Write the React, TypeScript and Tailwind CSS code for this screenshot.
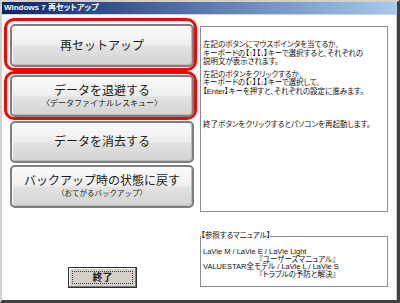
const bigBtn =
  "flex flex-col items-center justify-center rounded-[5px] border-2 border-[#7f7f7f] bg-[linear-gradient(to_bottom,#fbfbfb,#efefef_48%,#e3e3e3_52%,#d3d3d3)] shadow-[inset_1px_1px_0_#ffffff,inset_-1px_-1px_0_#bcbcbc] text-[#1c1c1c]";

export default function App() {
  return (
    <div className="w-[400px] h-[303px] flex flex-col border-l-2 border-t-2 border-[#d4d0c8] border-r-[3px] border-b-[3px] border-r-[#404040] border-b-[#404040] bg-white font-['Liberation_Sans','Noto_Sans_CJK_JP',sans-serif]">
      {/* Title bar */}
      <div className="h-[12px] flex items-center pl-[2px] bg-[linear-gradient(to_right,#0a246a,#a6caf0)] text-white text-[8px] font-bold leading-none [font-feature-settings:'palt']">
        Windows 7 再セットアップ
      </div>
      <div className="h-px bg-[#d4d0c8]" />

      {/* Content */}
      <div className="flex-1 flex border-r border-[#d4d0c8]">
        {/* Left column */}
        <div className="w-[196px] flex flex-col">
          <div className="mt-[3px] ml-[2px] w-[193px] border-[3px] border-[#ff0000] rounded-[10px] pl-[3px] pt-[3px] pb-[1px]">
            <div className={`${bigBtn} h-[43px]`}>
              <span className="text-[12px] leading-none">再セットアップ</span>
            </div>
          </div>
          <div className="ml-[2px] w-[193px] border-[3px] border-[#ff0000] rounded-[10px] pl-[3px] pt-[1px]">
            <div className={`${bigBtn} h-[42px]`}>
              <span className="text-[12px] leading-none">データを退避する</span>
              <span className="text-[8px] leading-none mt-[3px]">〈データファイナルレスキュー〉</span>
            </div>
          </div>
          <div className={`${bigBtn} h-[42px] ml-[8px] w-[184px] mt-[1px]`}>
            <span className="text-[12px] leading-none">データを消去する</span>
          </div>
          <div className={`${bigBtn} h-[43px] ml-[8px] w-[184px] mt-[2px]`}>
            <span className="text-[12px] leading-none">バックアップ時の状態に戻す</span>
            <span className="text-[7.5px] leading-none mt-[3px]">（おてがるバックアップ）</span>
          </div>

          <button className="mt-[59px] ml-[66px] w-[69px] h-[21px] p-[3px] bg-[#d4d0c8] border border-[#303030] shadow-[inset_-1px_-1px_0_#808080,inset_1px_1px_0_#ffffff]">
            <div className="h-full border border-dotted border-[#404040] flex items-center justify-center text-[10px] font-bold leading-none text-[#202020]">
              終了
            </div>
          </button>
        </div>

        {/* Right column */}
        <div className="ml-[2px] w-[188px] flex flex-col text-[7.5px] text-[#111] [font-feature-settings:'palt']">
          <div className="mt-[11px] h-[186px] border border-[#8e8e8e] pl-[2px] pt-[14px] leading-[8.7px]">
            <p>左記のボタンにマウスポインタを当てるか、</p>
            <p>キーボードの【↑】【↓】キーで選択すると、それぞれの</p>
            <p>説明文が表示されます。</p>
            <p className="mt-[3.5px]">左記のボタンをクリックするか、</p>
            <p>キーボードの【↑】【↓】キーで選択して、</p>
            <p>【Enter】キーを押すと、それぞれの設定に進みます。</p>
            <p className="mt-[24px]">終了ボタンをクリックするとパソコンを再起動します。</p>
          </div>

          <fieldset className="mt-[20px] h-[55px] border border-[#8e8e8e] leading-[7.6px]">
            <legend className="leading-[8px]">【参照するマニュアル】</legend>
            <div className="pl-[2px] pt-[8px]">
              <p>LaVie M / LaVie E / LaVie Light</p>
              <p className="pl-[56px]">『ユーザーズマニュアル』</p>
              <p>VALUESTAR全モデル / LaVie L / LaVie S</p>
              <p className="pl-[56px]">『トラブルの予防と解決』</p>
            </div>
          </fieldset>
        </div>
      </div>
    </div>
  );
}
